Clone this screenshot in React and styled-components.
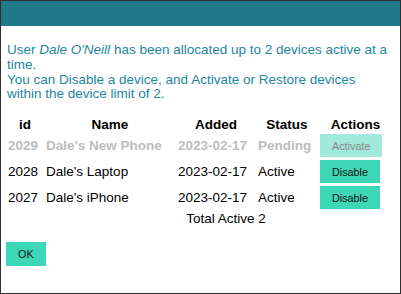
import React from "react";
import styled, { createGlobalStyle } from "styled-components";

const Global = createGlobalStyle`
  html, body { margin: 0; padding: 0; background: #fff; }
  body { font-family: "Liberation Sans", Arial, sans-serif; }
`;

const Dialog = styled.div`
  box-sizing: border-box;
  width: 401px;
  height: 294px;
  border: 1px solid #2e2e2e;
  background: #fff;
  display: flex;
  flex-direction: column;
`;

const TitleBar = styled.div`
  height: 25px;
  background: #1f7888;
  flex: none;
`;

const Body = styled.div`
  padding: 0 6px;
  display: flex;
  flex-direction: column;
  align-items: flex-start;
`;

const Intro = styled.p`
  width: 383px;
  margin: 17px 0 15px;
  font-size: 13.5px;
  line-height: 14.8px;
  color: #2386a0;
`;

const Table = styled.table`
  border-collapse: collapse;
  table-layout: fixed;
  width: 387px;
  margin-left: -1px;
  font-size: 13.5px;
`;

const Th = styled.th`
  box-sizing: border-box;
  padding: 0 2px;
  height: 15.5px;
  line-height: 15.5px;
  font-weight: bold;
  text-align: center;
  color: #000;
  width: ${(p) => p.$w}px;
`;

const Td = styled.td`
  padding: 0 2px;
  height: 26px;
  white-space: nowrap;
  text-align: left;
  vertical-align: middle;
  color: ${(p) => (p.$pending ? "#bdbdbd" : "#000")};
  font-weight: ${(p) => (p.$pending ? "bold" : "normal")};
`;

const TotalCell = styled.td`
  padding: 0 0 0 53px;
  height: 15.5px;
  line-height: 15.5px;
  text-align: center;
  color: #000;
`;

const ActionButton = styled.button`
  display: block;
  height: 23px;
  padding: 0 12px;
  border: none;
  border-radius: 0;
  font-family: "Liberation Sans", Arial, sans-serif;
  font-size: 10.8px;
  background: ${(p) => (p.$disabled ? "#a0eadb" : "#3dd6b6")};
  color: ${(p) => (p.$disabled ? "#8a8a8a" : "#111")};
  cursor: pointer;
`;

const OkButton = styled.button`
  margin: 15.5px 0 0 -1px;
  height: 24px;
  padding: 0 12px;
  border: none;
  border-radius: 0;
  font-family: "Liberation Sans", Arial, sans-serif;
  font-size: 10.8px;
  background: #3dd6b6;
  color: #111;
`;

const rows = [
  { id: 2029, name: "Dale's New Phone", added: "2023-02-17", status: "Pending", action: "Activate", pending: true },
  { id: 2028, name: "Dale's Laptop", added: "2023-02-17", status: "Active", action: "Disable" },
  { id: 2027, name: "Dale's iPhone", added: "2023-02-17", status: "Active", action: "Disable" },
];

export default function App() {
  return (
    <>
      <Global />
      <Dialog>
        <TitleBar />
        <Body>
          <Intro>
            User <i>Dale O'Neill</i> has been allocated up to 2 devices active at a time.
            <br />
            You can Disable a device, and Activate or Restore devices within the device limit of 2.
          </Intro>
          <Table>
            <thead>
              <tr>
                <Th $w={38}>id</Th>
                <Th $w={132}>Name</Th>
                <Th $w={80}>Added</Th>
                <Th $w={62}>Status</Th>
                <Th $w={75}>Actions</Th>
              </tr>
            </thead>
            <tbody>
              {rows.map((r) => (
                <tr key={r.id}>
                  <Td $pending={r.pending}>{r.id}</Td>
                  <Td $pending={r.pending}>{r.name}</Td>
                  <Td $pending={r.pending}>{r.added}</Td>
                  <Td $pending={r.pending}>{r.status}</Td>
                  <Td>
                    <ActionButton $disabled={r.pending}>{r.action}</ActionButton>
                  </Td>
                </tr>
              ))}
              <tr>
                <TotalCell colSpan={5}>Total Active 2</TotalCell>
              </tr>
            </tbody>
          </Table>
          <OkButton>OK</OkButton>
        </Body>
      </Dialog>
    </>
  );
}
